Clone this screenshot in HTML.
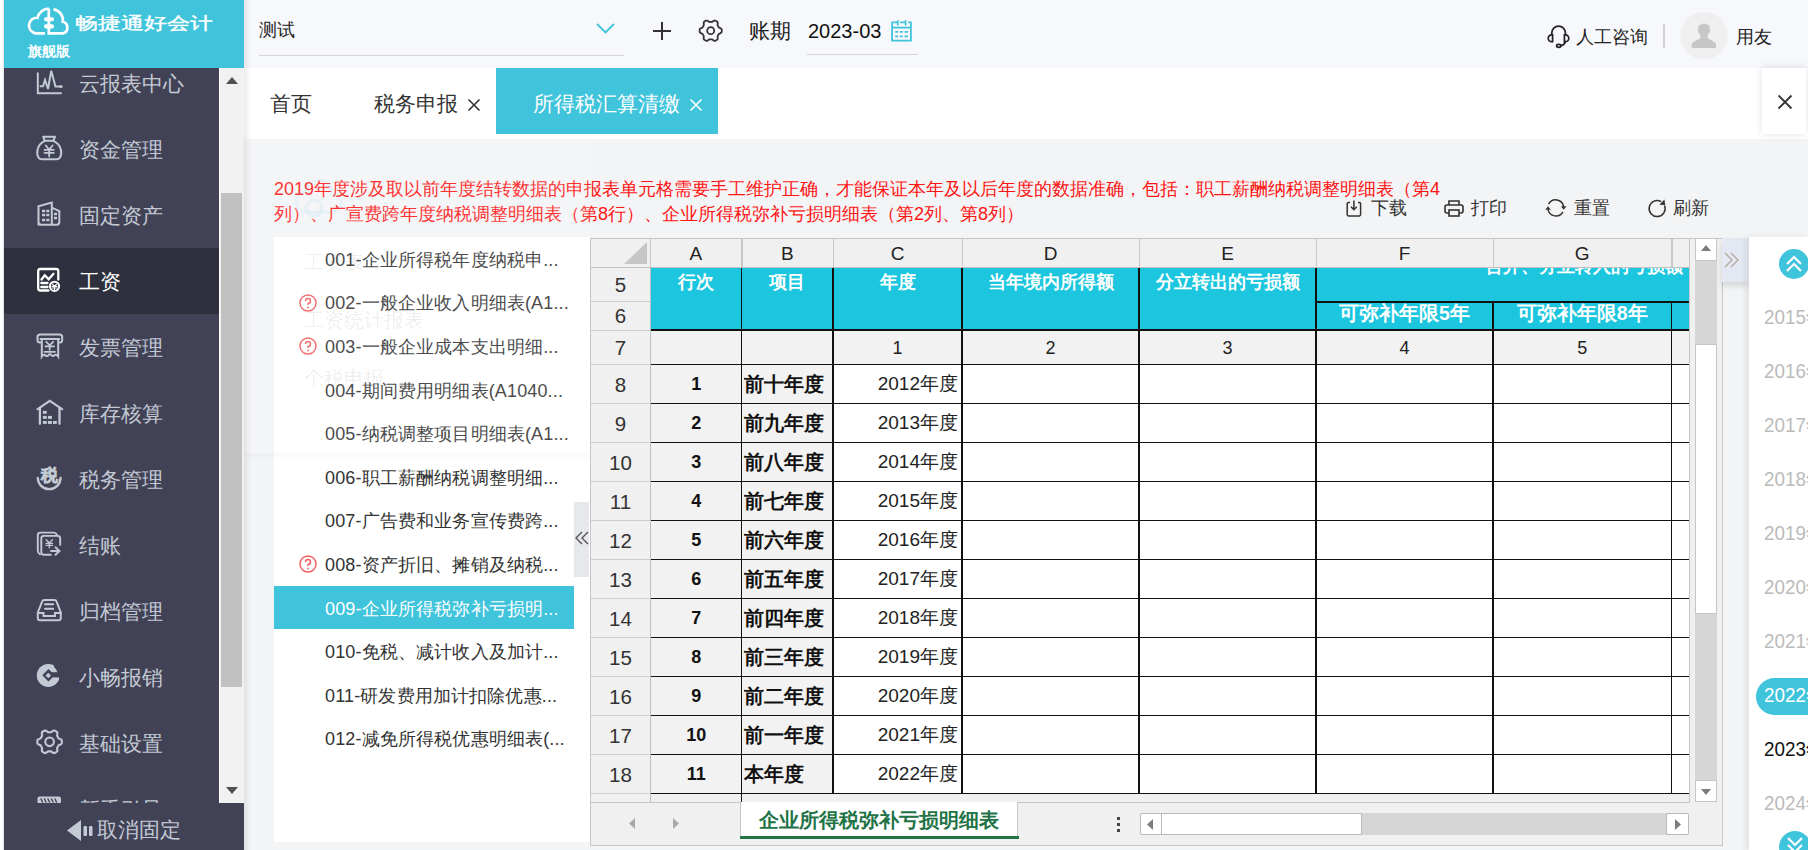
<!DOCTYPE html>
<html><head><meta charset="utf-8">
<style>
*{box-sizing:border-box;margin:0;padding:0}
html,body{width:1808px;height:850px;overflow:hidden;background:#f3f4f6;font-family:"Liberation Sans",sans-serif;color:#333}
.a{position:absolute}
.t{position:absolute;white-space:nowrap;line-height:1}
svg.i{position:absolute;overflow:visible}
</style></head><body>

<div class="a" style="left:0;top:0;width:4px;height:850px;background:linear-gradient(to right,#fff 0,#fff 2px,#ececec 3px,#e6e6e6 4px)"></div>
<div class="a" style="left:4px;top:0;width:240px;height:68px;background:#40c4dc"></div>
<svg class="i" style="left:24px;top:2px" width="50" height="40" viewBox="0 0 50 40">
<g fill="none" stroke="#fff" stroke-width="2.7">
<path d="M21 31.3 H12 A7.7 7.7 0 0 1 13.5 15.8 A12 12 0 0 1 24.8 6.5"/>
<path d="M24.8 6.5 V31.3 H39 A6 6 0 0 0 38.8 19.7 A11 11 0 0 0 29.5 7.3"/>
</g>
<rect x="20" y="15.3" width="10" height="4" rx="2" fill="#fff"/>
<rect x="20" y="22.3" width="10" height="4.2" rx="2" fill="#fff"/>
</svg>
<div class="t" style="left:75px;top:14.5px;font-size:23px;color:#fff;letter-spacing:-0.1px;-webkit-text-stroke:.5px #fff;transform:scaleY(.74);transform-origin:0 0">畅捷通好会计</div>
<div class="t" style="left:28px;top:45px;font-size:13.5px;color:#fff;font-weight:bold">旗舰版</div>
<div class="a" style="left:4px;top:68px;width:215px;height:735px;background:#424257;overflow:hidden">
<div class="t" style="left:75px;top:5px;font-size:21px;color:#c3cad3">云报表中心</div>
<svg class="i" style="left:26px;top:-2px" width="40" height="40" viewBox="0 0 40 40"><g fill="none" stroke="#c3cad3" stroke-width="2" stroke-linecap="round"><path d="M7.8 7.3 V27.3 H31" /><path d="M10.5 20.2 H13 L15 14 L18 23 L21.2 4.8 L25.5 20.5 H30"/><circle cx="31" cy="20.5" r="1.6" fill="#c3cad3" stroke="none"/></g></svg>
<div class="t" style="left:75px;top:71px;font-size:21px;color:#c3cad3">资金管理</div>
<svg class="i" style="left:26px;top:62px" width="40" height="40" viewBox="0 0 40 40"><g fill="none" stroke="#c3cad3" stroke-width="2" stroke-linecap="round"><path d="M13.2 6.8 H25 L23.3 10.8 H14.8Z" stroke-linejoin="round"/><path d="M14.8 10.8 C6 15 6.5 24 8.5 27.5 Q9.5 29.2 12 29.2 H26.5 Q29 29.2 30 27.5 C32 24 32.5 15 23.3 10.8"/><path d="M15.8 15.5 L19.2 19.8 L22.6 15.5 M14.5 19.8 H23.8 M14.5 22.8 H23.8 M19.2 19.8 V26.5" stroke-width="1.8"/></g></svg>
<div class="t" style="left:75px;top:137px;font-size:21px;color:#c3cad3">固定资产</div>
<svg class="i" style="left:26px;top:128px" width="40" height="40" viewBox="0 0 40 40"><g fill="none" stroke="#c3cad3" stroke-width="2" stroke-linecap="round"><path d="M8.5 28.8 V10.2 L21.8 6.6 V28.8 M21.8 11.6 L29.3 15.1 V26 Q29.3 28.8 26.5 28.8 H11.3 Q8.5 28.8 8.5 26"/><path d="M12 15 H15.2 M16.3 15 H19.3 M12 19 H15.2 M16.3 19 H19.3 M12 24 H15.2 M16.3 24 H19.3 M24 18 H27 M24 22 H27" stroke-width="2.3" stroke-linecap="butt"/></g></svg>
<div class="a" style="left:0;top:180px;width:215px;height:66px;background:#2e303d"></div>
<div class="t" style="left:75px;top:203px;font-size:21px;color:#fff">工资</div>
<svg class="i" style="left:26px;top:194px" width="40" height="40" viewBox="0 0 40 40"><g fill="none" stroke="#fff" stroke-width="2" stroke-linecap="round"><path d="M18.5 28.5 H10.5 Q8.2 28.5 8.2 26.2 V9.3 Q8.2 7 10.5 7 H26 Q28.3 7 28.3 9.3 V17.5" stroke-width="2.3"/><path d="M11.5 17.5 L14.8 13.3 L18.6 17.2 L23.5 11.8" stroke-width="2.3"/><path d="M11.3 21 H17.5 M11.3 25 H17.5" stroke-width="2.3"/><circle cx="24.5" cy="24.3" r="4.6" stroke-width="2"/><path d="M22.5 22.2 L24.5 24.2 L26.5 22.2 M22 24.4 H27 M22 26 H27 M24.5 24.2 V27.5" stroke-width="1.1"/></g></svg>
<div class="t" style="left:75px;top:269px;font-size:21px;color:#c3cad3">发票管理</div>
<svg class="i" style="left:26px;top:260px" width="40" height="40" viewBox="0 0 40 40"><g fill="none" stroke="#c3cad3" stroke-width="2" stroke-linecap="round"><path d="M10.5 14.6 H10 Q7.5 14.6 7.5 12 V9.2 Q7.5 6.6 10 6.6 H29.7 Q32.2 6.6 32.2 9.2 V12 Q32.2 14.6 29.7 14.6 H29.2"/><path d="M10.5 11 H29.2"/><path d="M11.8 11 V28.5 Q13.5 25.8 15.3 27.2 Q17 29 18.5 27.2 Q20 25.5 21.5 27.2 Q23 29 24.5 27.2 Q26.3 25.8 28.2 28.5 V11"/><path d="M16.3 13.8 L19.7 17.3 L23.1 13.8 M15.5 18.3 H24 M19.7 17.3 V21.8 M14.5 23.8 H25" stroke-width="1.8"/></g></svg>
<div class="t" style="left:75px;top:335px;font-size:21px;color:#c3cad3">库存核算</div>
<svg class="i" style="left:26px;top:326px" width="40" height="40" viewBox="0 0 40 40"><g fill="none" stroke="#c3cad3" stroke-width="2" stroke-linecap="round"><path d="M7.3 15.3 L19.8 6.8 L32.4 15.3" /><path d="M9.9 14 V29.8 M29.5 14 V29.8" stroke-width="2.3"/><g fill="#c3cad3" stroke="none"><rect x="12.9" y="16.9" width="3.8" height="2.9"/><rect x="12.9" y="21.9" width="3.8" height="3"/><rect x="17.9" y="21.9" width="4" height="3"/><rect x="12.9" y="27" width="3.8" height="2.9"/><rect x="17.9" y="27" width="4" height="2.9"/><rect x="23" y="27" width="3.8" height="2.9"/></g></g></svg>
<div class="t" style="left:75px;top:401px;font-size:21px;color:#c3cad3">税务管理</div>
<svg class="i" style="left:26px;top:392px" width="40" height="40" viewBox="0 0 40 40"><g fill="none" stroke="#c3cad3" stroke-width="2" stroke-linecap="round"><path d="M7.8 17.8 A11.4 11.4 0 0 0 30.6 17.8" stroke-width="2.3"/><text x="19.4" y="20.6" text-anchor="middle" font-size="17" font-weight="bold" fill="#c3cad3" stroke="#c3cad3" stroke-width="0.6">税</text></g></svg>
<div class="t" style="left:75px;top:467px;font-size:21px;color:#c3cad3">结账</div>
<svg class="i" style="left:26px;top:458px" width="40" height="40" viewBox="0 0 40 40"><g fill="none" stroke="#c3cad3" stroke-width="2" stroke-linecap="round"><path d="M26.8 8.6 Q26 6.6 23.8 6.6 H10.3 Q7.8 6.6 7.8 9.1 V24.8 Q7.8 27 10 28.3" stroke-width="1.9"/><path d="M20.8 28.8 H13.8 Q11.3 28.8 11.3 26.3 V12.4 Q11.3 9.9 13.8 9.9 H27.7 Q30.2 9.9 30.2 12.4 V18.8" stroke-width="1.9"/><path d="M16.2 13.8 L19.3 17 L22.4 13.8 M16 17.3 H22.6 M16 19.3 H22.6 M19.3 17 V21.8" stroke-width="1.3"/><path d="M21 25 H29.3 M25.5 21.3 L29.5 25 L25.5 28.8" stroke-width="1.9"/></g></svg>
<div class="t" style="left:75px;top:533px;font-size:21px;color:#c3cad3">归档管理</div>
<svg class="i" style="left:26px;top:524px" width="40" height="40" viewBox="0 0 40 40"><g fill="none" stroke="#c3cad3" stroke-width="2" stroke-linecap="round"><path d="M7.8 20.5 L12 9.8 Q12.6 8 14.5 8 H24.2 Q26.1 8 26.7 9.8 L30.8 20.5 V26 Q30.8 28.3 28.5 28.3 H10.1 Q7.8 28.3 7.8 26Z" stroke-linejoin="round"/><path d="M7.8 21 H13.5 V24 H25 V21 H30.8"/><path d="M15 12.2 H23.2 M15 16.8 H23.2"/></g></svg>
<div class="t" style="left:75px;top:599px;font-size:21px;color:#c3cad3">小畅报销</div>
<svg class="i" style="left:26px;top:590px" width="40" height="40" viewBox="0 0 40 40"><g fill="none" stroke="#c3cad3" stroke-width="2" stroke-linecap="round"><circle cx="18.3" cy="17.4" r="11.5" fill="#c3cad3" stroke="none"/><path d="M21 14.3 H31 V19.3 H21Z M24 4 H32 V14.3 H27.5 Q26.5 11 24 9Z M20 19.3 L29.3 18.6 L29 26 L31 30 H34 V19Z" fill="#424257" stroke="none"/><path d="M18.5 11 L24.7 17.2 L18.5 23.4 L12.3 17.2Z" fill="#424257" stroke="none"/><path d="M18.3 14.7 L21.1 17.5 L18.3 20.3 L15.5 17.5Z" fill="#c3cad3" stroke="none"/></g></svg>
<div class="t" style="left:75px;top:665px;font-size:21px;color:#c3cad3">基础设置</div>
<svg class="i" style="left:26px;top:656px" width="40" height="40" viewBox="0 0 40 40"><g fill="none" stroke="#c3cad3" stroke-width="2" stroke-linecap="round"><path d="M31.85 17.80 L31.84 18.23 L31.82 18.65 L31.78 19.08 L31.73 19.50 L31.40 19.88 L30.91 20.21 L30.40 20.49 L29.86 20.74 L29.33 20.96 L28.83 21.16 L28.45 21.38 L28.32 21.68 L28.18 21.99 L28.03 22.28 L27.87 22.57 L27.70 22.86 L27.52 23.14 L27.33 23.41 L27.13 23.68 L27.12 24.11 L27.20 24.65 L27.28 25.21 L27.33 25.80 L27.34 26.40 L27.30 26.98 L27.14 27.45 L26.80 27.71 L26.45 27.96 L26.09 28.19 L25.73 28.41 L25.35 28.62 L24.97 28.81 L24.58 28.99 L24.19 29.16 L23.70 29.06 L23.17 28.80 L22.67 28.49 L22.18 28.16 L21.73 27.81 L21.31 27.47 L20.93 27.26 L20.60 27.30 L20.27 27.33 L19.93 27.34 L19.60 27.35 L19.27 27.34 L18.93 27.33 L18.60 27.30 L18.27 27.26 L17.89 27.47 L17.47 27.81 L17.02 28.16 L16.53 28.49 L16.03 28.80 L15.50 29.06 L15.01 29.16 L14.62 28.99 L14.23 28.81 L13.85 28.62 L13.48 28.41 L13.11 28.19 L12.75 27.96 L12.40 27.71 L12.06 27.45 L11.90 26.98 L11.86 26.40 L11.87 25.80 L11.92 25.21 L12.00 24.65 L12.08 24.11 L12.07 23.68 L11.87 23.41 L11.68 23.14 L11.50 22.86 L11.33 22.57 L11.17 22.28 L11.02 21.99 L10.88 21.68 L10.75 21.38 L10.37 21.16 L9.87 20.96 L9.34 20.74 L8.80 20.49 L8.29 20.21 L7.80 19.88 L7.47 19.50 L7.42 19.08 L7.38 18.65 L7.36 18.23 L7.35 17.80 L7.36 17.37 L7.38 16.95 L7.42 16.52 L7.47 16.10 L7.80 15.72 L8.29 15.39 L8.80 15.11 L9.34 14.86 L9.87 14.64 L10.37 14.44 L10.75 14.22 L10.88 13.92 L11.02 13.61 L11.17 13.32 L11.33 13.02 L11.50 12.74 L11.68 12.46 L11.87 12.19 L12.07 11.92 L12.08 11.49 L12.00 10.95 L11.92 10.39 L11.87 9.80 L11.86 9.20 L11.90 8.62 L12.06 8.15 L12.40 7.89 L12.75 7.64 L13.11 7.41 L13.47 7.19 L13.85 6.98 L14.23 6.79 L14.62 6.61 L15.01 6.44 L15.50 6.54 L16.03 6.80 L16.53 7.11 L17.02 7.44 L17.47 7.79 L17.89 8.13 L18.27 8.34 L18.60 8.30 L18.93 8.27 L19.27 8.26 L19.60 8.25 L19.93 8.26 L20.27 8.27 L20.60 8.30 L20.93 8.34 L21.31 8.13 L21.73 7.79 L22.18 7.44 L22.67 7.11 L23.17 6.80 L23.70 6.54 L24.19 6.44 L24.58 6.61 L24.97 6.79 L25.35 6.98 L25.73 7.19 L26.09 7.41 L26.45 7.64 L26.80 7.89 L27.14 8.15 L27.30 8.62 L27.34 9.20 L27.33 9.80 L27.28 10.39 L27.20 10.95 L27.12 11.49 L27.13 11.92 L27.33 12.19 L27.52 12.46 L27.70 12.74 L27.87 13.02 L28.03 13.32 L28.18 13.61 L28.32 13.92 L28.45 14.22 L28.83 14.44 L29.33 14.64 L29.86 14.86 L30.40 15.11 L30.91 15.39 L31.40 15.72 L31.73 16.10 L31.78 16.52 L31.82 16.95 L31.84 17.37Z" stroke-width="2.1" stroke-linejoin="round"/><circle cx="19.6" cy="17.8" r="4.3" stroke-width="2.1"/></g></svg>
<div class="t" style="left:75px;top:731px;font-size:21px;color:#c3cad3">新手引导</div>
<svg class="i" style="left:26px;top:722px" width="40" height="40" viewBox="0 0 40 40"><g fill="none" stroke="#c3cad3" stroke-width="2" stroke-linecap="round"><rect x="7.5" y="6.5" width="23.5" height="8" rx="2" fill="#c3cad3" stroke="none"/><path d="M11 9 L12.5 12 M14.5 9 L16 12 M18 9 L19.5 12 M21.5 9 L23 12 M25 9 L26.5 12" stroke="#424257" stroke-width="1.4"/></g></svg>
</div>
<div class="a" style="left:219px;top:68px;width:1px;height:735px;background:#fff"></div>
<div class="a" style="left:220px;top:68px;width:24px;height:735px;background:#f1f1f1"></div>
<div class="a" style="left:221px;top:193px;width:21px;height:494px;background:#c1c1c1"></div>
<svg class="i" style="left:226px;top:77px" width="12" height="7"><path d="M0 7 L6 0 L12 7Z" fill="#505050"/></svg>
<svg class="i" style="left:226px;top:787px" width="12" height="7"><path d="M0 0 L6 7 L12 0Z" fill="#505050"/></svg>
<div class="a" style="left:4px;top:803px;width:240px;height:47px;background:#424257"></div>
<svg class="i" style="left:67px;top:820px" width="28" height="21"><path d="M14 0 V21 L0 10.5Z" fill="#c3cad3"/><rect x="16.5" y="6" width="3.5" height="10" rx="1" fill="#c3cad3"/><rect x="22" y="6" width="3.5" height="10" rx="1" fill="#c3cad3"/></svg>
<div class="t" style="left:97px;top:819px;font-size:21px;color:#c3cad3">取消固定</div>
<div class="a" style="left:244px;top:0;width:1564px;height:68px;background:#f7f8fc"></div>
<div class="t" style="left:259px;top:21px;font-size:18px;color:#222">测试</div>
<div class="a" style="left:259px;top:55px;width:365px;height:1px;background:#d6d6d6"></div>
<svg class="i" style="left:596px;top:23px" width="19" height="11"><path d="M1 1 L9.5 9.5 L18 1" fill="none" stroke="#40c4dc" stroke-width="1.8"/></svg>
<svg class="i" style="left:653px;top:22px" width="18" height="18"><path d="M9 0 V18 M0 9 H18" stroke="#333" stroke-width="2"/></svg>
<svg class="i" style="left:698px;top:19px" width="24" height="24" viewBox="0 0 24 24"><path d="M23.75 11.70 L23.74 12.09 L23.72 12.47 L23.69 12.86 L23.64 13.24 L23.36 13.58 L22.94 13.88 L22.49 14.14 L22.03 14.38 L21.57 14.58 L21.14 14.77 L20.81 14.98 L20.69 15.26 L20.56 15.54 L20.43 15.81 L20.28 16.07 L20.12 16.34 L19.95 16.59 L19.78 16.84 L19.60 17.09 L19.58 17.47 L19.63 17.94 L19.68 18.44 L19.71 18.96 L19.70 19.48 L19.65 19.99 L19.50 20.41 L19.20 20.64 L18.88 20.86 L18.56 21.07 L18.23 21.27 L17.89 21.46 L17.54 21.63 L17.19 21.79 L16.84 21.95 L16.40 21.87 L15.93 21.66 L15.48 21.40 L15.05 21.12 L14.64 20.83 L14.26 20.54 L13.92 20.36 L13.61 20.40 L13.31 20.43 L13.01 20.44 L12.70 20.45 L12.39 20.44 L12.09 20.43 L11.79 20.40 L11.48 20.36 L11.14 20.54 L10.76 20.83 L10.35 21.12 L9.92 21.40 L9.47 21.66 L9.00 21.87 L8.56 21.95 L8.21 21.79 L7.86 21.63 L7.51 21.46 L7.18 21.27 L6.84 21.07 L6.52 20.86 L6.20 20.64 L5.90 20.41 L5.75 19.99 L5.70 19.48 L5.69 18.96 L5.72 18.44 L5.77 17.94 L5.82 17.47 L5.80 17.09 L5.62 16.84 L5.45 16.59 L5.28 16.34 L5.12 16.07 L4.97 15.81 L4.84 15.54 L4.71 15.26 L4.59 14.98 L4.26 14.77 L3.83 14.58 L3.37 14.38 L2.91 14.14 L2.46 13.88 L2.04 13.58 L1.76 13.24 L1.71 12.86 L1.68 12.47 L1.66 12.09 L1.65 11.70 L1.66 11.31 L1.68 10.93 L1.71 10.54 L1.76 10.16 L2.04 9.82 L2.46 9.52 L2.91 9.26 L3.37 9.02 L3.83 8.82 L4.26 8.63 L4.59 8.42 L4.71 8.14 L4.84 7.86 L4.97 7.59 L5.12 7.32 L5.28 7.06 L5.45 6.81 L5.62 6.56 L5.80 6.31 L5.82 5.93 L5.77 5.46 L5.72 4.96 L5.69 4.44 L5.70 3.92 L5.75 3.41 L5.90 2.99 L6.20 2.76 L6.52 2.54 L6.84 2.33 L7.17 2.13 L7.51 1.94 L7.86 1.77 L8.21 1.61 L8.56 1.45 L9.00 1.53 L9.47 1.74 L9.92 2.00 L10.35 2.28 L10.76 2.57 L11.14 2.86 L11.48 3.04 L11.79 3.00 L12.09 2.97 L12.39 2.96 L12.70 2.95 L13.01 2.96 L13.31 2.97 L13.61 3.00 L13.92 3.04 L14.26 2.86 L14.64 2.57 L15.05 2.28 L15.48 2.00 L15.93 1.74 L16.40 1.53 L16.84 1.45 L17.19 1.61 L17.54 1.77 L17.89 1.94 L18.23 2.13 L18.56 2.33 L18.88 2.54 L19.20 2.76 L19.50 2.99 L19.65 3.41 L19.70 3.92 L19.71 4.44 L19.68 4.96 L19.63 5.46 L19.58 5.93 L19.60 6.31 L19.78 6.56 L19.95 6.81 L20.12 7.06 L20.28 7.32 L20.43 7.59 L20.56 7.86 L20.69 8.14 L20.81 8.42 L21.14 8.63 L21.57 8.82 L22.03 9.02 L22.49 9.26 L22.94 9.52 L23.36 9.82 L23.64 10.16 L23.69 10.54 L23.72 10.93 L23.74 11.31Z" fill="none" stroke="#333" stroke-width="1.8" stroke-linejoin="round"/><circle cx="12.7" cy="11.7" r="3.5" fill="none" stroke="#333" stroke-width="1.8"/></svg>
<div class="t" style="left:749px;top:21px;font-size:20.5px;color:#222">账期</div>
<div class="t" style="left:808px;top:21px;font-size:20px;color:#111">2023-03</div>
<svg class="i" style="left:884px;top:14px" width="34" height="34" viewBox="0 0 34 34"><g fill="none" stroke="#40c4dc" stroke-width="1.8"><path d="M13 8.3 H8.1 V26.7 H26.9 V8.3 H24.2 M16 8.3 H20.8"/><path d="M8.1 13.6 H26.9"/><path d="M13.8 6.2 V11.6 M21.6 6.2 V11.6"/><path d="M11.2 17.8 H14.2 M16 17.8 H18.9 M20.6 17.8 H24 M11.2 22.3 H14.2 M16 22.3 H18.9 M20.6 22.3 H24" stroke-width="1.7"/></g></svg>
<div class="a" style="left:807px;top:54px;width:111px;height:1px;background:#d6d6d6"></div>
<svg class="i" style="left:1540px;top:16px" width="40" height="40" viewBox="0 0 40 40"><g fill="none" stroke="#222" stroke-width="1.7"><path d="M11.8 19 V17 A6.8 6.8 0 0 1 25.4 17 V19"/><path d="M12.6 18.8 H11.6 A3.4 3.4 0 0 0 11.6 25.6 H12.6Z"/><path d="M24.4 18.8 H25.4 A3.4 3.4 0 0 1 25.4 25.6 H24.4Z"/><path d="M25.2 25.8 Q24.5 29 21 29.7"/><ellipse cx="18.8" cy="29.8" rx="2.2" ry="1.5"/></g></svg>
<div class="t" style="left:1576px;top:28px;font-size:18px;color:#222">人工咨询</div>
<div class="a" style="left:1663px;top:24px;width:2px;height:24px;background:#d0d0d0"></div>
<svg class="i" style="left:1676px;top:8px" width="56" height="56" viewBox="0 0 56 56"><circle cx="28" cy="27.7" r="23.8" fill="#efefef"/><ellipse cx="28" cy="21.7" rx="6.1" ry="6.3" fill="#c6c6c6"/><path d="M24.5 26 V30 L16.8 34.6 Q15.8 35.3 15.8 36.5 V39.9 H40 V36.5 Q40 35.3 39 34.6 L31.5 30 V26Z" fill="#c6c6c6"/></svg>
<div class="t" style="left:1736px;top:28px;font-size:18px;color:#222">用友</div>
<div class="a" style="left:244px;top:68px;width:1564px;height:71px;background:#fff"></div>
<div class="t" style="left:270px;top:93px;font-size:21px;color:#333">首页</div>
<div class="t" style="left:374px;top:93px;font-size:21px;color:#333">税务申报</div>
<svg class="i" style="left:468px;top:99px" width="12" height="12"><path d="M0.5 0.5 L11.5 11.5 M11.5 0.5 L0.5 11.5" stroke="#333" stroke-width="1.6"/></svg>
<div class="a" style="left:496px;top:68px;width:222px;height:66px;background:#40c4dc"></div>
<div class="t" style="left:533px;top:93px;font-size:21px;color:#fff">所得税汇算清缴</div>
<svg class="i" style="left:690px;top:99px" width="12" height="12"><path d="M0.5 0.5 L11.5 11.5 M11.5 0.5 L0.5 11.5" stroke="#fff" stroke-width="1.6"/></svg>
<div class="a" style="left:1762px;top:68px;width:44px;height:66px;background:#fff;box-shadow:0 0 8px rgba(0,0,0,.12)"></div>
<svg class="i" style="left:1778px;top:95px" width="14" height="14"><path d="M0.5 0.5 L13.5 13.5 M13.5 0.5 L0.5 13.5" stroke="#333" stroke-width="1.8"/></svg>
<div class="a" style="left:244px;top:0;width:7px;height:850px;background:linear-gradient(to right,rgba(0,0,0,.08),rgba(0,0,0,0))"></div>
<div class="t" style="left:274px;top:180px;font-size:18px;color:#ff1414">2019年度涉及取以前年度结转数据的申报表单元格需要手工维护正确，才能保证本年及以后年度的数据准确，包括：职工薪酬纳税调整明细表（第4</div>
<div class="t" style="left:274px;top:204.5px;font-size:18px;color:#ff1414">列）、广宣费跨年度纳税调整明细表（第8行）、企业所得税弥补亏损明细表（第2列、第8列）</div>
<svg class="i" style="left:1346px;top:200px" width="17" height="17" viewBox="0 0 17 17"><path d="M4 2.5 H2.5 Q1.2 2.5 1.2 3.8 V14.6 Q1.2 15.9 2.5 15.9 H13.3 Q14.6 15.9 14.6 14.6 V3.8 Q14.6 2.5 13.3 2.5 H12" fill="none" stroke="#333" stroke-width="1.5"/><path d="M7.9 0.5 V9.5 M5 6.8 L7.9 9.7 L10.8 6.8" fill="none" stroke="#333" stroke-width="1.5"/></svg>
<div class="t" style="left:1371px;top:199px;font-size:18px;color:#333">下载</div>
<svg class="i" style="left:1444px;top:200px" width="20" height="17" viewBox="0 0 20 17"><path d="M5 5 V1 H15 V5" fill="none" stroke="#333" stroke-width="1.6"/><rect x="1" y="5" width="18" height="8" rx="2" fill="none" stroke="#333" stroke-width="1.6"/><rect x="5" y="10" width="10" height="6" fill="#f3f4f6" stroke="#333" stroke-width="1.6"/></svg>
<div class="t" style="left:1471px;top:199px;font-size:18px;color:#333">打印</div>
<svg class="i" style="left:1545px;top:198px" width="22" height="20" viewBox="0 0 22 20"><g fill="none" stroke="#333" stroke-width="1.5"><path d="M3.6 6.2 A8 8 0 0 1 18.6 8.6"/><path d="M17.9 13.8 A8 8 0 0 1 3 11.4"/></g><path d="M15.9 8.2 H21.5 L18.7 11.8Z M0.2 11.8 H5.8 L3 8.2Z" fill="#333"/></svg>
<div class="t" style="left:1574px;top:199px;font-size:18px;color:#333">重置</div>
<svg class="i" style="left:1647px;top:199px" width="20" height="20" viewBox="0 0 20 20"><path d="M14.2 2.6 A8 8 0 1 0 17.6 6.6" fill="none" stroke="#333" stroke-width="1.5"/><path d="M12.4 5.7 L18.2 6.1 L17.4 0.6Z" fill="#333"/></svg>
<div class="t" style="left:1673px;top:199px;font-size:18px;color:#333">刷新</div>
<div class="a" style="left:274px;top:237px;width:316px;height:605px;background:#fff"></div>
<div class="t" style="left:325px;top:250.7px;font-size:18px;letter-spacing:.15px;color:#333">001-企业所得税年度纳税申...</div>
<div class="t" style="left:325px;top:294.3px;font-size:18px;letter-spacing:.15px;color:#333">002-一般企业收入明细表(A1...</div>
<svg class="i" style="left:299px;top:293.8px" width="18" height="18" viewBox="0 0 18 18"><circle cx="9" cy="9" r="8" fill="none" stroke="#f25b5b" stroke-width="1.4"/><path d="M6.5 7 A2.5 2.5 0 1 1 9 9.5 V11" fill="none" stroke="#f25b5b" stroke-width="1.4"/><circle cx="9" cy="13.5" r=".9" fill="#f25b5b"/></svg>
<div class="t" style="left:325px;top:337.9px;font-size:18px;letter-spacing:.15px;color:#333">003-一般企业成本支出明细...</div>
<svg class="i" style="left:299px;top:337.4px" width="18" height="18" viewBox="0 0 18 18"><circle cx="9" cy="9" r="8" fill="none" stroke="#f25b5b" stroke-width="1.4"/><path d="M6.5 7 A2.5 2.5 0 1 1 9 9.5 V11" fill="none" stroke="#f25b5b" stroke-width="1.4"/><circle cx="9" cy="13.5" r=".9" fill="#f25b5b"/></svg>
<div class="t" style="left:325px;top:381.5px;font-size:18px;letter-spacing:.15px;color:#333">004-期间费用明细表(A1040...</div>
<div class="t" style="left:325px;top:425.1px;font-size:18px;letter-spacing:.15px;color:#333">005-纳税调整项目明细表(A1...</div>
<div class="t" style="left:325px;top:468.7px;font-size:18px;letter-spacing:.15px;color:#333">006-职工薪酬纳税调整明细...</div>
<div class="t" style="left:325px;top:512.3px;font-size:18px;letter-spacing:.15px;color:#333">007-广告费和业务宣传费跨...</div>
<div class="t" style="left:325px;top:555.9px;font-size:18px;letter-spacing:.15px;color:#333">008-资产折旧、摊销及纳税...</div>
<svg class="i" style="left:299px;top:555.4px" width="18" height="18" viewBox="0 0 18 18"><circle cx="9" cy="9" r="8" fill="none" stroke="#f25b5b" stroke-width="1.4"/><path d="M6.5 7 A2.5 2.5 0 1 1 9 9.5 V11" fill="none" stroke="#f25b5b" stroke-width="1.4"/><circle cx="9" cy="13.5" r=".9" fill="#f25b5b"/></svg>
<div class="a" style="left:274px;top:585.5px;width:300px;height:43px;background:#40c4dc"></div>
<div class="t" style="left:325px;top:599.5px;font-size:18px;letter-spacing:.15px;color:#fff">009-企业所得税弥补亏损明...</div>
<div class="t" style="left:325px;top:643.1px;font-size:18px;letter-spacing:.15px;color:#333">010-免税、减计收入及加计...</div>
<div class="t" style="left:325px;top:686.7px;font-size:18px;letter-spacing:.15px;color:#333">011-研发费用加计扣除优惠...</div>
<div class="t" style="left:325px;top:730.3px;font-size:18px;letter-spacing:.15px;color:#333">012-减免所得税优惠明细表(...</div>
<div class="a" style="left:245px;top:139px;width:345px;height:316px;background:rgba(255,255,255,.12)"></div>
<div class="a" style="left:245px;top:453px;width:345px;height:8px;background:linear-gradient(to bottom,rgba(0,0,0,.025),rgba(0,0,0,0))"></div>
<div class="t" style="left:304px;top:252px;font-size:20px;color:rgba(0,0,0,.08)">工资表</div>
<div class="t" style="left:304px;top:310px;font-size:20px;color:rgba(0,0,0,.08)">工资统计报表</div>
<div class="t" style="left:304px;top:368px;font-size:20px;color:rgba(0,0,0,.08)">个税申报</div>
<svg class="i" style="left:296px;top:172px" width="46" height="50" viewBox="0 0 46 50"><g fill="none" stroke="rgba(64,196,220,.07)" stroke-width="3"><path d="M10 40 H36 A9 9 0 0 0 36 22 A13 13 0 0 0 10 20 A10 10 0 0 0 10 40Z"/><circle cx="18" cy="36" r="8"/></g></svg>
<div class="a" style="left:574px;top:502px;width:15px;height:75px;background:#e6e8ec"></div>
<svg class="i" style="left:575px;top:531px" width="14" height="14"><path d="M7 1 L1 7 L7 13 M13 1 L7 7 L13 13" fill="none" stroke="#555" stroke-width="1.4"/></svg>
<div class="a" style="left:590px;top:238px;width:1133px;height:608px;background:#f0f0f0;border:1px solid #c6c6c6"></div>
<div class="a" style="left:591px;top:239px;width:1099px;height:564px;overflow:hidden;background:#fff">
<div class="a" style="left:0.0px;top:0.0px;width:1099.0px;height:28.0px;background:#f0f0f0"></div>
<div class="a" style="left:0.0px;top:0.0px;width:59.0px;height:1099.0px;background:#f0f0f0"></div>
<svg class="i" style="left:33px;top:3px" width="23" height="22"><path d="M23 0 V22 H0Z" fill="#c6c6c6"/></svg>
<div class="t" style="left:59.0px;top:4.5px;width:91.5px;text-align:center;font-size:19px;color:#222;">A</div>
<div class="t" style="left:150.5px;top:4.5px;width:91.5px;text-align:center;font-size:19px;color:#222;">B</div>
<div class="t" style="left:242.0px;top:4.5px;width:129.0px;text-align:center;font-size:19px;color:#222;">C</div>
<div class="t" style="left:371.0px;top:4.5px;width:177.0px;text-align:center;font-size:19px;color:#222;">D</div>
<div class="t" style="left:548.0px;top:4.5px;width:177.0px;text-align:center;font-size:19px;color:#222;">E</div>
<div class="t" style="left:725.0px;top:4.5px;width:177.0px;text-align:center;font-size:19px;color:#222;">F</div>
<div class="t" style="left:902.0px;top:4.5px;width:178.5px;text-align:center;font-size:19px;color:#222;">G</div>
<div class="a" style="left:58.5px;top:0.0px;width:1.5px;height:28.0px;background:#c8c8c8"></div>
<div class="a" style="left:150.0px;top:0.0px;width:1.5px;height:28.0px;background:#c8c8c8"></div>
<div class="a" style="left:241.5px;top:0.0px;width:1.5px;height:28.0px;background:#c8c8c8"></div>
<div class="a" style="left:370.5px;top:0.0px;width:1.5px;height:28.0px;background:#c8c8c8"></div>
<div class="a" style="left:547.5px;top:0.0px;width:1.5px;height:28.0px;background:#c8c8c8"></div>
<div class="a" style="left:724.5px;top:0.0px;width:1.5px;height:28.0px;background:#c8c8c8"></div>
<div class="a" style="left:901.5px;top:0.0px;width:1.5px;height:28.0px;background:#c8c8c8"></div>
<div class="a" style="left:1080.0px;top:0.0px;width:1.5px;height:28.0px;background:#c8c8c8"></div>
<div class="a" style="left:0.0px;top:27.5px;width:1099.0px;height:1.5px;background:#c0c0c0"></div>
<div class="t" style="left:0.0px;top:35.8px;width:59.0px;text-align:center;font-size:20.5px;color:#333;">5</div>
<div class="a" style="left:0.0px;top:62.0px;width:59.0px;height:1.2px;background:#cccccc"></div>
<div class="t" style="left:0.0px;top:67.2px;width:59.0px;text-align:center;font-size:20.5px;color:#333;">6</div>
<div class="a" style="left:0.0px;top:90.5px;width:59.0px;height:1.2px;background:#cccccc"></div>
<div class="t" style="left:0.0px;top:98.8px;width:59.0px;text-align:center;font-size:20.5px;color:#333;">7</div>
<div class="a" style="left:0.0px;top:125.1px;width:59.0px;height:1.2px;background:#cccccc"></div>
<div class="t" style="left:0.0px;top:135.6px;width:59.0px;text-align:center;font-size:20.5px;color:#333;">8</div>
<div class="a" style="left:0.0px;top:164.1px;width:59.0px;height:1.2px;background:#cccccc"></div>
<div class="t" style="left:0.0px;top:174.6px;width:59.0px;text-align:center;font-size:20.5px;color:#333;">9</div>
<div class="a" style="left:0.0px;top:203.1px;width:59.0px;height:1.2px;background:#cccccc"></div>
<div class="t" style="left:0.0px;top:213.6px;width:59.0px;text-align:center;font-size:20.5px;color:#333;">10</div>
<div class="a" style="left:0.0px;top:242.1px;width:59.0px;height:1.2px;background:#cccccc"></div>
<div class="t" style="left:0.0px;top:252.6px;width:59.0px;text-align:center;font-size:20.5px;color:#333;">11</div>
<div class="a" style="left:0.0px;top:281.1px;width:59.0px;height:1.2px;background:#cccccc"></div>
<div class="t" style="left:0.0px;top:291.6px;width:59.0px;text-align:center;font-size:20.5px;color:#333;">12</div>
<div class="a" style="left:0.0px;top:320.1px;width:59.0px;height:1.2px;background:#cccccc"></div>
<div class="t" style="left:0.0px;top:330.6px;width:59.0px;text-align:center;font-size:20.5px;color:#333;">13</div>
<div class="a" style="left:0.0px;top:359.1px;width:59.0px;height:1.2px;background:#cccccc"></div>
<div class="t" style="left:0.0px;top:369.6px;width:59.0px;text-align:center;font-size:20.5px;color:#333;">14</div>
<div class="a" style="left:0.0px;top:398.1px;width:59.0px;height:1.2px;background:#cccccc"></div>
<div class="t" style="left:0.0px;top:408.6px;width:59.0px;text-align:center;font-size:20.5px;color:#333;">15</div>
<div class="a" style="left:0.0px;top:437.1px;width:59.0px;height:1.2px;background:#cccccc"></div>
<div class="t" style="left:0.0px;top:447.6px;width:59.0px;text-align:center;font-size:20.5px;color:#333;">16</div>
<div class="a" style="left:0.0px;top:476.1px;width:59.0px;height:1.2px;background:#cccccc"></div>
<div class="t" style="left:0.0px;top:486.6px;width:59.0px;text-align:center;font-size:20.5px;color:#333;">17</div>
<div class="a" style="left:0.0px;top:515.1px;width:59.0px;height:1.2px;background:#cccccc"></div>
<div class="t" style="left:0.0px;top:525.6px;width:59.0px;text-align:center;font-size:20.5px;color:#333;">18</div>
<div class="a" style="left:0.0px;top:554.1px;width:59.0px;height:1.2px;background:#cccccc"></div>
<div class="t" style="left:0.0px;top:564.6px;width:59.0px;text-align:center;font-size:20.5px;color:#333;">19</div>
<div class="a" style="left:0.0px;top:593.1px;width:59.0px;height:1.2px;background:#cccccc"></div>
<div class="a" style="left:58.5px;top:28.0px;width:1.5px;height:536.0px;background:#c0c0c0"></div>
<div class="a" style="left:60.0px;top:28.5px;width:1039.0px;height:62.5px;background:#1cc6de"></div>
<div class="a" style="left:60.0px;top:91.0px;width:1039.0px;height:34.6px;background:#f2f2f2"></div>
<div class="a" style="left:60.0px;top:125.6px;width:182.0px;height:438.4px;background:#f2f2f2"></div>
<div class="a" style="left:60.0px;top:554.6px;width:1039.0px;height:10.0px;background:#f0f0f0"></div>
<div class="t" style="left:60.0px;top:34.0px;width:90.5px;text-align:center;font-size:18px;color:#fff;font-weight:bold;">行次</div>
<div class="t" style="left:150.5px;top:34.0px;width:91.5px;text-align:center;font-size:18px;color:#fff;font-weight:bold;">项目</div>
<div class="t" style="left:242.0px;top:34.0px;width:129.0px;text-align:center;font-size:18px;color:#fff;font-weight:bold;">年度</div>
<div class="t" style="left:371.0px;top:34.0px;width:177.0px;text-align:center;font-size:18px;color:#fff;font-weight:bold;">当年境内所得额</div>
<div class="t" style="left:548.0px;top:34.0px;width:177.0px;text-align:center;font-size:18px;color:#fff;font-weight:bold;">分立转出的亏损额</div>
<div class="a" style="left:725px;top:28.5px;width:374px;height:34px;overflow:hidden"><div class="t" style="left:169px;top:-11px;font-size:18px;color:#fff;font-weight:bold">合并、分立转入的亏损额</div></div>
<div class="t" style="left:725.0px;top:65.0px;width:177.0px;text-align:center;font-size:19.5px;color:#fff;font-weight:bold;">可弥补年限5年</div>
<div class="t" style="left:902.0px;top:65.0px;width:178.5px;text-align:center;font-size:19.5px;color:#fff;font-weight:bold;">可弥补年限8年</div>
<div class="t" style="left:242.0px;top:100.0px;width:129.0px;text-align:center;font-size:18px;color:#222;">1</div>
<div class="t" style="left:371.0px;top:100.0px;width:177.0px;text-align:center;font-size:18px;color:#222;">2</div>
<div class="t" style="left:548.0px;top:100.0px;width:177.0px;text-align:center;font-size:18px;color:#222;">3</div>
<div class="t" style="left:725.0px;top:100.0px;width:177.0px;text-align:center;font-size:18px;color:#222;">4</div>
<div class="t" style="left:902.0px;top:100.0px;width:178.5px;text-align:center;font-size:18px;color:#222;">5</div>
<div class="t" style="left:60.0px;top:135.6px;width:90.5px;text-align:center;font-size:18px;color:#111;font-weight:bold;">1</div>
<div class="t" style="left:153.0px;top:134.6px;font-size:20px;color:#111;font-weight:bold;">前十年度</div>
<div class="t" style="left:242px;top:135.1px;width:125px;text-align:right;font-size:19px;color:#222">2012年度</div>
<div class="t" style="left:60.0px;top:174.6px;width:90.5px;text-align:center;font-size:18px;color:#111;font-weight:bold;">2</div>
<div class="t" style="left:153.0px;top:173.6px;font-size:20px;color:#111;font-weight:bold;">前九年度</div>
<div class="t" style="left:242px;top:174.1px;width:125px;text-align:right;font-size:19px;color:#222">2013年度</div>
<div class="t" style="left:60.0px;top:213.6px;width:90.5px;text-align:center;font-size:18px;color:#111;font-weight:bold;">3</div>
<div class="t" style="left:153.0px;top:212.6px;font-size:20px;color:#111;font-weight:bold;">前八年度</div>
<div class="t" style="left:242px;top:213.1px;width:125px;text-align:right;font-size:19px;color:#222">2014年度</div>
<div class="t" style="left:60.0px;top:252.6px;width:90.5px;text-align:center;font-size:18px;color:#111;font-weight:bold;">4</div>
<div class="t" style="left:153.0px;top:251.6px;font-size:20px;color:#111;font-weight:bold;">前七年度</div>
<div class="t" style="left:242px;top:252.1px;width:125px;text-align:right;font-size:19px;color:#222">2015年度</div>
<div class="t" style="left:60.0px;top:291.6px;width:90.5px;text-align:center;font-size:18px;color:#111;font-weight:bold;">5</div>
<div class="t" style="left:153.0px;top:290.6px;font-size:20px;color:#111;font-weight:bold;">前六年度</div>
<div class="t" style="left:242px;top:291.1px;width:125px;text-align:right;font-size:19px;color:#222">2016年度</div>
<div class="t" style="left:60.0px;top:330.6px;width:90.5px;text-align:center;font-size:18px;color:#111;font-weight:bold;">6</div>
<div class="t" style="left:153.0px;top:329.6px;font-size:20px;color:#111;font-weight:bold;">前五年度</div>
<div class="t" style="left:242px;top:330.1px;width:125px;text-align:right;font-size:19px;color:#222">2017年度</div>
<div class="t" style="left:60.0px;top:369.6px;width:90.5px;text-align:center;font-size:18px;color:#111;font-weight:bold;">7</div>
<div class="t" style="left:153.0px;top:368.6px;font-size:20px;color:#111;font-weight:bold;">前四年度</div>
<div class="t" style="left:242px;top:369.1px;width:125px;text-align:right;font-size:19px;color:#222">2018年度</div>
<div class="t" style="left:60.0px;top:408.6px;width:90.5px;text-align:center;font-size:18px;color:#111;font-weight:bold;">8</div>
<div class="t" style="left:153.0px;top:407.6px;font-size:20px;color:#111;font-weight:bold;">前三年度</div>
<div class="t" style="left:242px;top:408.1px;width:125px;text-align:right;font-size:19px;color:#222">2019年度</div>
<div class="t" style="left:60.0px;top:447.6px;width:90.5px;text-align:center;font-size:18px;color:#111;font-weight:bold;">9</div>
<div class="t" style="left:153.0px;top:446.6px;font-size:20px;color:#111;font-weight:bold;">前二年度</div>
<div class="t" style="left:242px;top:447.1px;width:125px;text-align:right;font-size:19px;color:#222">2020年度</div>
<div class="t" style="left:60.0px;top:486.6px;width:90.5px;text-align:center;font-size:18px;color:#111;font-weight:bold;">10</div>
<div class="t" style="left:153.0px;top:485.6px;font-size:20px;color:#111;font-weight:bold;">前一年度</div>
<div class="t" style="left:242px;top:486.1px;width:125px;text-align:right;font-size:19px;color:#222">2021年度</div>
<div class="t" style="left:60.0px;top:525.6px;width:90.5px;text-align:center;font-size:18px;color:#111;font-weight:bold;">11</div>
<div class="t" style="left:153.0px;top:524.6px;font-size:20px;color:#111;font-weight:bold;">本年度</div>
<div class="t" style="left:242px;top:525.1px;width:125px;text-align:right;font-size:19px;color:#222">2022年度</div>
<div class="a" style="left:149.5px;top:28.5px;width:1.9px;height:526.0px;background:#111"></div>
<div class="a" style="left:241.0px;top:28.5px;width:1.9px;height:526.0px;background:#111"></div>
<div class="a" style="left:370.0px;top:28.5px;width:1.9px;height:526.0px;background:#111"></div>
<div class="a" style="left:547.0px;top:28.5px;width:1.9px;height:526.0px;background:#111"></div>
<div class="a" style="left:724.0px;top:28.5px;width:1.9px;height:526.0px;background:#111"></div>
<div class="a" style="left:149.5px;top:554.0px;width:1.9px;height:10.0px;background:#111"></div>
<div class="a" style="left:901.0px;top:63.0px;width:1.9px;height:491.0px;background:#111"></div>
<div class="a" style="left:1079.5px;top:63.0px;width:1.9px;height:491.0px;background:#111"></div>
<div class="a" style="left:60.0px;top:90.0px;width:1039.0px;height:1.9px;background:#111"></div>
<div class="a" style="left:60.0px;top:124.6px;width:1039.0px;height:1.9px;background:#111"></div>
<div class="a" style="left:60.0px;top:163.6px;width:1039.0px;height:1.9px;background:#111"></div>
<div class="a" style="left:60.0px;top:202.6px;width:1039.0px;height:1.9px;background:#111"></div>
<div class="a" style="left:60.0px;top:241.6px;width:1039.0px;height:1.9px;background:#111"></div>
<div class="a" style="left:60.0px;top:280.6px;width:1039.0px;height:1.9px;background:#111"></div>
<div class="a" style="left:60.0px;top:319.6px;width:1039.0px;height:1.9px;background:#111"></div>
<div class="a" style="left:60.0px;top:358.6px;width:1039.0px;height:1.9px;background:#111"></div>
<div class="a" style="left:60.0px;top:397.6px;width:1039.0px;height:1.9px;background:#111"></div>
<div class="a" style="left:60.0px;top:436.6px;width:1039.0px;height:1.9px;background:#111"></div>
<div class="a" style="left:60.0px;top:475.6px;width:1039.0px;height:1.9px;background:#111"></div>
<div class="a" style="left:60.0px;top:514.6px;width:1039.0px;height:1.9px;background:#111"></div>
<div class="a" style="left:60.0px;top:553.6px;width:1039.0px;height:1.9px;background:#111"></div>
<div class="a" style="left:725.0px;top:62.0px;width:374.0px;height:1.9px;background:#111"></div>
</div>
<div class="a" style="left:1689px;top:239px;width:1px;height:563px;background:#c6c6c6"></div>
<div class="a" style="left:1695px;top:260px;width:22px;height:541px;background:#d6d6d6"></div>
<div class="a" style="left:1695px;top:344px;width:22px;height:270px;background:#fff;border:1px solid #c6c6c6"></div>
<div class="a" style="left:1695px;top:238px;width:22px;height:23px;background:#fff;border:1px solid #c6c6c6"></div>
<svg class="i" style="left:1701px;top:245px" width="10" height="6"><path d="M0 6 L5 0 L10 6Z" fill="#7c7c7c"/></svg>
<div class="a" style="left:1695px;top:780px;width:22px;height:22px;background:#fff;border:1px solid #c6c6c6"></div>
<svg class="i" style="left:1701px;top:789px" width="10" height="6"><path d="M0 0 L5 6 L10 0Z" fill="#7c7c7c"/></svg>
<div class="a" style="left:591px;top:802px;width:1099px;height:1px;background:#c6c6c6"></div>
<svg class="i" style="left:629px;top:818px" width="6" height="11"><path d="M6 0 V11 L0 5.5Z" fill="#aaa"/></svg>
<svg class="i" style="left:673px;top:818px" width="6" height="11"><path d="M0 0 V11 L6 5.5Z" fill="#aaa"/></svg>
<div class="a" style="left:740px;top:802px;width:278px;height:37px;background:#fff;border-left:1px solid #c6c6c6;border-right:1px solid #c6c6c6"></div>
<div class="a" style="left:740px;top:836px;width:279px;height:3px;background:#217346"></div>
<div class="t" style="left:759px;top:810px;font-size:20px;color:#217346;font-weight:bold">企业所得税弥补亏损明细表</div>
<svg class="i" style="left:1117px;top:817px" width="4" height="15"><rect x="0" y="0" width="3" height="3" fill="#444"/><rect x="0" y="6" width="3" height="3" fill="#444"/><rect x="0" y="12" width="3" height="3" fill="#444"/></svg>
<div class="a" style="left:1140px;top:813px;width:549px;height:22px;background:#d6d6d6;border-radius:2px"></div>
<div class="a" style="left:1140px;top:813px;width:222px;height:22px;background:#fff;border:1px solid #bbb;border-radius:2px"></div>
<div class="a" style="left:1161px;top:813px;width:1px;height:22px;background:#bbb"></div>
<svg class="i" style="left:1147px;top:819px" width="6" height="11"><path d="M6 0 V11 L0 5.5Z" fill="#7c7c7c"/></svg>
<div class="a" style="left:1666px;top:813px;width:23px;height:22px;background:#fff;border:1px solid #bbb;border-radius:2px"></div>
<svg class="i" style="left:1675px;top:819px" width="6" height="11"><path d="M0 0 V11 L6 5.5Z" fill="#7c7c7c"/></svg>
<div class="a" style="left:1722px;top:238px;width:27px;height:44px;background:#e4e8f2;box-shadow:0 4px 6px rgba(0,0,0,.12)"></div>
<svg class="i" style="left:1724px;top:252px" width="16" height="16"><path d="M1 1 L8 8 L1 15 M7 1 L14 8 L7 15" fill="none" stroke="#b5aba3" stroke-width="1.4"/></svg>
<div class="a" style="left:1749px;top:237px;width:59px;height:613px;background:#fff;box-shadow:-4px 0 6px rgba(0,0,0,.07)"></div>
<div class="a" style="left:1779px;top:249px;width:30px;height:30px;border-radius:50%;background:#40c4dc"></div>
<svg class="i" style="left:1786px;top:254px" width="16" height="20"><path d="M1 10 L8 3 L15 10 M1 17 L8 10 L15 17" fill="none" stroke="#fff" stroke-width="2.2"/></svg>
<div class="t" style="left:1764px;top:307.0px;font-size:20.5px;color:#bbb;transform:scaleX(.92);transform-origin:0 0">2015年</div>
<div class="t" style="left:1764px;top:361.0px;font-size:20.5px;color:#bbb;transform:scaleX(.92);transform-origin:0 0">2016年</div>
<div class="t" style="left:1764px;top:415.0px;font-size:20.5px;color:#bbb;transform:scaleX(.92);transform-origin:0 0">2017年</div>
<div class="t" style="left:1764px;top:469.0px;font-size:20.5px;color:#bbb;transform:scaleX(.92);transform-origin:0 0">2018年</div>
<div class="t" style="left:1764px;top:523.0px;font-size:20.5px;color:#bbb;transform:scaleX(.92);transform-origin:0 0">2019年</div>
<div class="t" style="left:1764px;top:577.0px;font-size:20.5px;color:#bbb;transform:scaleX(.92);transform-origin:0 0">2020年</div>
<div class="t" style="left:1764px;top:631.0px;font-size:20.5px;color:#bbb;transform:scaleX(.92);transform-origin:0 0">2021年</div>
<div class="a" style="left:1756px;top:678.0px;width:80px;height:37px;border-radius:18.5px;background:#40c4dc"></div>
<div class="t" style="left:1764px;top:685.0px;font-size:20.5px;color:#fff;transform:scaleX(.92);transform-origin:0 0">2022年</div>
<div class="t" style="left:1764px;top:739.0px;font-size:20.5px;color:#111;transform:scaleX(.92);transform-origin:0 0">2023年</div>
<div class="t" style="left:1764px;top:793.0px;font-size:20.5px;color:#bbb;transform:scaleX(.92);transform-origin:0 0">2024年</div>
<div class="a" style="left:1779px;top:831px;width:32px;height:32px;border-radius:50%;background:#40c4dc"></div>
<svg class="i" style="left:1787px;top:835px" width="16" height="20"><path d="M1 3 L8 10 L15 3 M1 10 L8 17 L15 10" fill="none" stroke="#fff" stroke-width="2.2"/></svg>
</body></html>
